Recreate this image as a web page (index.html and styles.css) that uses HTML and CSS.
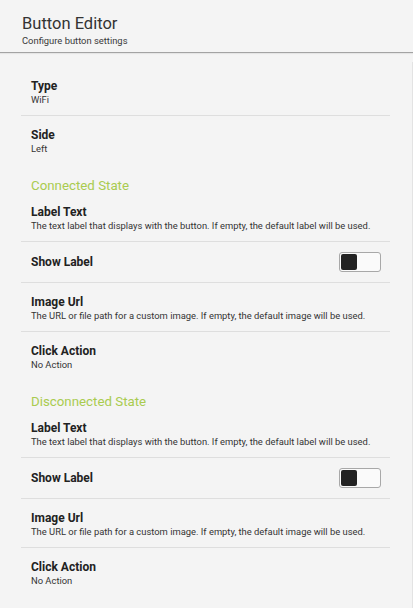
FILE: index.html
```html
<!DOCTYPE html>
<html>
<head>
<meta charset="utf-8">
<link rel="stylesheet" href="styles.css">
</head>
<body>
<header class="header">
  <div class="title">Button Editor</div>
  <div class="subtitle">Configure button settings</div>
</header>
<main class="scroll">
  <div class="list">
    <div class="row">
      <div class="label">Type</div>
      <div class="desc">WiFi</div>
    </div>
    <div class="row last">
      <div class="label">Side</div>
      <div class="desc">Left</div>
    </div>
    <div class="section">Connected State</div>
    <div class="row">
      <div class="label">Label Text</div>
      <div class="desc">The text label that displays with the button. If empty, the default label will be used.</div>
    </div>
    <div class="row toggle-row">
      <div class="label">Show Label</div>
      <div class="toggle"><span class="knob"></span></div>
    </div>
    <div class="row">
      <div class="label">Image Url</div>
      <div class="desc">The URL or file path for a custom image. If empty, the default image will be used.</div>
    </div>
    <div class="row last">
      <div class="label">Click Action</div>
      <div class="desc">No Action</div>
    </div>
    <div class="section">Disconnected State</div>
    <div class="row">
      <div class="label">Label Text</div>
      <div class="desc">The text label that displays with the button. If empty, the default label will be used.</div>
    </div>
    <div class="row toggle-row">
      <div class="label">Show Label</div>
      <div class="toggle"><span class="knob"></span></div>
    </div>
    <div class="row">
      <div class="label">Image Url</div>
      <div class="desc">The URL or file path for a custom image. If empty, the default image will be used.</div>
    </div>
    <div class="row last">
      <div class="label">Click Action</div>
      <div class="desc">No Action</div>
    </div>
  </div>
</main>
</body>
</html>
```
FILE: styles.css
```css
* { box-sizing: border-box; }
html, body {
  margin: 0;
  padding: 0;
  background: #f4f4f4;
  font-family: Roboto, "Liberation Sans", sans-serif;
  color: #222;
  height: 100%;
  overflow: hidden;
}
.header {
  padding: 13px 22px 5px;
  border-bottom: 1px solid #a3a3a3;
  box-shadow: 0 1px 1px rgba(0,0,0,0.06);
}
.title {
  font-size: 16.5px;
  line-height: 22px;
  color: #333;
}
.subtitle {
  font-size: 9.4px;
  line-height: 12px;
  color: #3a3a3a;
}
.scroll {
  margin-top: 9px;
  border-right: 1px solid #e3e3e3;
  min-height: calc(100vh - 62px);
}
.list {
  margin: 0 22px 0 21px;
  padding-top: 5px;
}
.row {
  padding: 11px 10px 9px;
  border-bottom: 1px solid #dedede;
}
.row.last { border-bottom: none; }
.label {
  font-size: 12px;
  font-weight: 700;
  line-height: 16px;
  color: #222;
}
.desc {
  font-size: 9.4px;
  line-height: 12px;
  color: #333;
}
.section {
  padding: 14px 10px 0;
  font-size: 13.3px;
  line-height: 15px;
  color: #a9cb4f;
}
.toggle-row {
  display: flex;
  align-items: center;
  justify-content: space-between;
  padding: 10px 9px 10px 10px;
}
.toggle {
  width: 42px;
  height: 20px;
  border: 1px solid #a8a8a8;
  border-radius: 3px;
  background: #fafafa;
  padding: 1px;
  display: flex;
}
.knob {
  width: 16px;
  height: 16px;
  background: #222;
  border-radius: 2px;
}
```
